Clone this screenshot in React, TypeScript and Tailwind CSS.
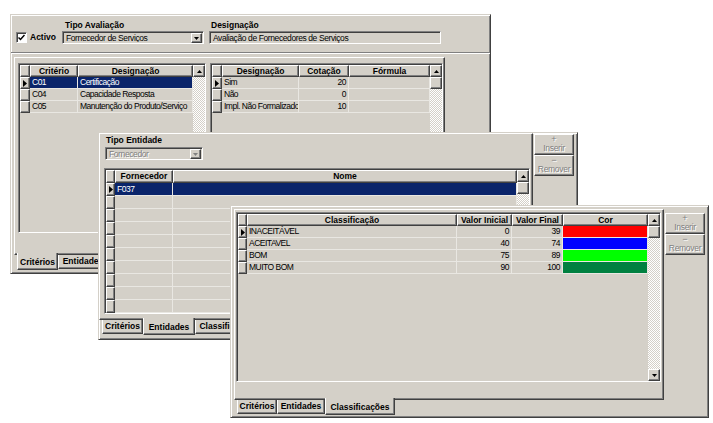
const RAISED =
  "border border-t-white border-l-white border-r-[#404040] border-b-[#404040] shadow-[inset_-1px_-1px_0_#808080]";
const SUNKEN =
  "border border-t-[#808080] border-l-[#808080] border-r-white border-b-white shadow-[inset_1px_1px_0_#404040]";
const CHECKER =
  "[background-image:repeating-conic-gradient(#ffffff_0_25%,#d4d0c8_0_50%)] [background-size:2px_2px]";
const WIN =
  "absolute flex bg-[#d4d0c8] border border-t-[#d4d0c8] border-l-[#d4d0c8] border-r-[#404040] border-b-[#404040] shadow-[inset_1px_1px_0_#ffffff,inset_-1px_-1px_0_#808080]";
const MUTED = "text-[#808080] [text-shadow:1px_1px_0_#ffffff]";

type Col = { title: string; w: string; right?: boolean };
type Row = { cells: string[]; fills?: string[] };
type TabItem = { label: string; w: string; active?: boolean };

function Tri({ up, muted }: { up?: boolean; muted?: boolean }) {
  return (
    <svg width="5" height="3" viewBox="0 0 5 3" className={muted ? "fill-[#808080]" : "fill-black"}>
      <path d={up ? "M2.5 0L5 3H0z" : "M0 0h5L2.5 3z"} />
    </svg>
  );
}

function Pointer() {
  return (
    <svg width="4" height="7" viewBox="0 0 4 7" className="fill-black">
      <path d="M0 0L4 3.5L0 7z" />
    </svg>
  );
}

function ScrollBar({ thumb }: { thumb: boolean }) {
  return (
    <div className="flex w-[12px] shrink-0 flex-col">
      <div className={`${RAISED} flex h-[12px] shrink-0 items-center justify-center bg-[#d4d0c8]`}>
        <Tri up />
      </div>
      {thumb && <div className={`${RAISED} h-[12px] shrink-0 bg-[#d4d0c8]`} />}
      <div className={`flex-1 ${CHECKER}`} />
      <div className={`${RAISED} flex h-[12px] shrink-0 items-center justify-center bg-[#d4d0c8]`}>
        <Tri />
      </div>
    </div>
  );
}

function Grid({
  box,
  ind,
  headH,
  rowH,
  cols,
  rows,
  selected,
  thumb = true,
}: {
  box: string;
  ind: string;
  headH: string;
  rowH: string;
  cols: Col[];
  rows: Row[];
  selected?: number;
  thumb?: boolean;
}) {
  return (
    <div className={`${SUNKEN} flex shrink-0 overflow-hidden bg-[#d4d0c8] pl-px pt-px ${box}`}>
      <div className="flex min-w-0 flex-1 flex-col">
        <div className={`flex shrink-0 ${headH}`}>
          <div className={`${RAISED} shrink-0 ${ind}`} />
          {cols.map((c) => (
            <div
              key={c.title}
              className={`${RAISED} ${c.w} flex shrink-0 items-center justify-center overflow-hidden whitespace-nowrap font-bold`}
            >
              {c.title}
            </div>
          ))}
        </div>
        {rows.map((r, i) => (
          <div key={i} className={`flex shrink-0 ${rowH}`}>
            <div className={`${RAISED} ${ind} flex shrink-0 items-center pl-[2px]`}>
              {i === 0 && <Pointer />}
            </div>
            {cols.map((c, j) => {
              const fill = r.fills?.[j];
              const sel = i === selected;
              return (
                <div
                  key={c.title}
                  className={`${c.w} flex shrink-0 items-center overflow-hidden whitespace-nowrap border-b border-r border-[#e9e7e2] px-[2px] tracking-[-0.5px] ${
                    c.right ? "justify-end" : ""
                  } ${fill ? fill : sel ? "bg-[#0a246a] text-white" : ""}`}
                >
                  {r.cells[j]}
                </div>
              );
            })}
          </div>
        ))}
      </div>
      <ScrollBar thumb={thumb} />
    </div>
  );
}

function Combo({ box, text, disabled }: { box: string; text: string; disabled?: boolean }) {
  return (
    <div className={`${SUNKEN} flex shrink-0 items-center bg-[#d4d0c8] pl-[3px] pr-px pt-px ${box}`}>
      <span className={`flex-1 overflow-hidden whitespace-nowrap tracking-[-0.4px] ${disabled ? MUTED : ""}`}>
        {text}
      </span>
      <div className={`${RAISED} flex h-[10px] w-[11px] shrink-0 items-center justify-center`}>
        <Tri muted={disabled} />
      </div>
    </div>
  );
}

function Tabs({ items }: { items: TabItem[] }) {
  return (
    <div className="flex items-start pl-[3px]">
      {items.map((t) =>
        t.active ? (
          <div
            key={t.label}
            className={`relative z-10 -mt-[2px] flex h-[17px] shrink-0 items-center justify-center overflow-hidden whitespace-nowrap border-b border-l border-r border-b-[#404040] border-l-white border-r-[#404040] bg-[#d4d0c8] pt-[2px] font-bold shadow-[inset_-1px_-1px_0_#808080] ${t.w}`}
          >
            {t.label}
          </div>
        ) : (
          <div
            key={t.label}
            className={`flex h-[14px] shrink-0 items-center justify-center overflow-hidden whitespace-nowrap border-b border-l border-r border-b-[#404040] border-l-white border-r-[#404040] font-bold shadow-[inset_-1px_-1px_0_#808080] ${t.w}`}
          >
            {t.label}
          </div>
        )
      )}
    </div>
  );
}

function SideButton({ sign, label }: { sign: string; label: string }) {
  return (
    <div
      className={`${RAISED} flex h-[21px] w-[40px] shrink-0 flex-col items-center justify-center gap-px bg-[#d4d0c8] ${MUTED}`}
    >
      <span className="text-[9px] leading-[7px]">{sign}</span>
      <span className="leading-[9px] tracking-[-0.3px]">{label}</span>
    </div>
  );
}

function CriteriaWindow() {
  return (
    <div className={`${WIN} left-[10px] top-[14px] h-[260px] w-[481px] flex-col`}>
      <div className="flex h-[37px] shrink-0 items-end pb-[8px]">
        <div className="ml-[5px] flex h-[13px] w-[46px] items-center gap-[3px]">
          <div className={`${SUNKEN} flex h-[11px] w-[11px] items-center justify-center bg-white`}>
            <svg width="7" height="7" viewBox="0 0 7 7" className="stroke-black" fill="none">
              <path d="M0.5 3.5L2.5 5.5L6.5 1" strokeWidth="1.5" />
            </svg>
          </div>
          <span className="font-bold">Activo</span>
        </div>
        <div className="flex w-[142px] flex-col">
          <span className="mb-[2px] pl-[3px] font-bold">Tipo Avaliação</span>
          <Combo box="h-[13px] w-[142px]" text="Fornecedor de Serviços" />
        </div>
        <div className="ml-[5px] flex w-[232px] flex-col">
          <span className="mb-[2px] pl-[2px] font-bold">Designação</span>
          <div className={`${SUNKEN} flex h-[13px] items-center bg-[#d4d0c8] pl-[3px] pt-px tracking-[-0.4px]`}>
            Avaliação de Fornecedores de Serviços
          </div>
        </div>
      </div>
      <div className="h-[2px] shrink-0 border-b border-t border-b-white border-t-[#808080]" />
      <div className="ml-[3px] mt-[3px] flex flex-col">
        <div className={`${RAISED} flex h-[198px] w-[431px] gap-[4px] pl-[3px] pt-[5px]`}>
          <Grid
            box="h-[170px] w-[188px]"
            ind="w-[10px]"
            headH="h-[12px]"
            rowH="h-[12px]"
            thumb={false}
            selected={0}
            cols={[
              { title: "Critério", w: "w-[48px]" },
              { title: "Designação", w: "w-[115px]" },
            ]}
            rows={[
              { cells: ["C01", "Certificação"] },
              { cells: ["C04", "Capacidade Resposta"] },
              { cells: ["C05", "Manutenção do Produto/Serviço"] },
            ]}
          />
          <Grid
            box="h-[170px] w-[233px]"
            ind="w-[10px]"
            headH="h-[12px]"
            rowH="h-[12px]"
            cols={[
              { title: "Designação", w: "w-[77px]" },
              { title: "Cotação", w: "w-[50px]", right: true },
              { title: "Fórmula", w: "w-[81px]" },
            ]}
            rows={[
              { cells: ["Sim", "20", ""] },
              { cells: ["Não", "0", ""] },
              { cells: ["Impl. Não Formalizado", "10", ""] },
            ]}
          />
        </div>
        <Tabs
          items={[
            { label: "Critérios", w: "w-[41px]", active: true },
            { label: "Entidades", w: "w-[50px]" },
          ]}
        />
      </div>
    </div>
  );
}

function EntitiesWindow() {
  const empty = Array.from({ length: 9 }, () => ({ cells: ["", ""] }));
  return (
    <div className={`${WIN} left-[98px] top-[132px] h-[208px] w-[480px]`}>
      <div className="flex w-[434px] shrink-0 flex-col">
        <div className={`${RAISED} flex h-[187px] flex-col`}>
          <span className="ml-[6px] mt-[2px] h-[11px] font-bold">Tipo Entidade</span>
          <Combo box="ml-[5px] h-[13px] w-[98px]" text="Fornecedor" disabled />
          <div className="ml-[4px] mt-[8px]">
            <Grid
              box="h-[146px] w-[426px]"
              ind="w-[9px]"
              headH="h-[13px]"
              rowH="h-[13px]"
              selected={0}
              cols={[
                { title: "Fornecedor", w: "w-[58px]" },
                { title: "Nome", w: "w-[344px]" },
              ]}
              rows={[{ cells: ["F037", ""] }, ...empty]}
            />
          </div>
        </div>
        <Tabs
          items={[
            { label: "Critérios", w: "w-[41px]" },
            { label: "Entidades", w: "w-[52px]", active: true },
            { label: "Classificações", w: "w-[68px]" },
          ]}
        />
      </div>
      <div className="flex flex-col pl-px pt-px">
        <SideButton sign="+" label="Inserir" />
        <SideButton sign="−" label="Remover" />
      </div>
    </div>
  );
}

function ClassWindow() {
  return (
    <div className={`${WIN} left-[230px] top-[205px] h-[213px] w-[479px]`}>
      <div className="ml-[3px] mt-[3px] flex w-[430px] shrink-0 flex-col">
        <div className={`${RAISED} h-[191px] pl-px pt-[2px]`}>
          <Grid
            box="h-[170px] w-[425px]"
            ind="w-[9px]"
            headH="h-[12px]"
            rowH="h-[12px]"
            cols={[
              { title: "Classificação", w: "w-[210px]" },
              { title: "Valor Inicial", w: "w-[55px]", right: true },
              { title: "Valor Final", w: "w-[51px]", right: true },
              { title: "Cor", w: "w-[85px]" },
            ]}
            rows={[
              { cells: ["INACEITÁVEL", "0", "39", ""], fills: ["", "", "", "bg-[#ff0000]"] },
              { cells: ["ACEITAVEL", "40", "74", ""], fills: ["", "", "", "bg-[#0000ff]"] },
              { cells: ["BOM", "75", "89", ""], fills: ["", "", "", "bg-[#00ff00]"] },
              { cells: ["MUITO BOM", "90", "100", ""], fills: ["", "", "", "bg-[#008040]"] },
            ]}
          />
        </div>
        <Tabs
          items={[
            { label: "Critérios", w: "w-[40px]" },
            { label: "Entidades", w: "w-[48px]" },
            { label: "Classificações", w: "w-[70px]", active: true },
          ]}
        />
      </div>
      <div className="flex flex-col pl-px pt-[7px]">
        <SideButton sign="+" label="Inserir" />
        <SideButton sign="−" label="Remover" />
      </div>
    </div>
  );
}

export default function App() {
  return (
    <div className="relative h-[423px] w-[713px] overflow-hidden bg-white text-[8.5px] leading-none text-black [font-family:'Liberation_Sans',Arial,sans-serif]">
      <CriteriaWindow />
      <EntitiesWindow />
      <ClassWindow />
    </div>
  );
}
